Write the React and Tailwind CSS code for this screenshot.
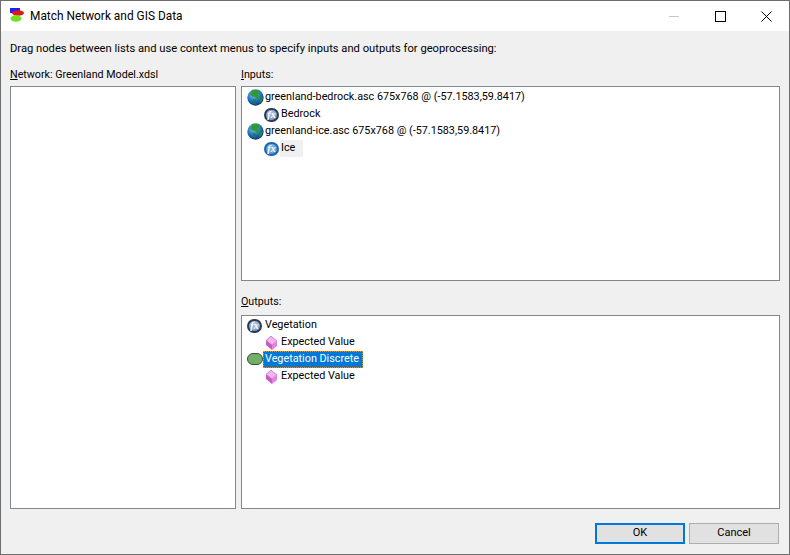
function Globe() {
  return (
    <svg width="17" height="17" viewBox="0 0 17 17" className="shrink-0">
      <defs>
        <radialGradient id="sea" cx="0.4" cy="0.3" r="0.8">
          <stop offset="0" stopColor="#8cc8f4" />
          <stop offset="0.55" stopColor="#1f6fc0" />
          <stop offset="1" stopColor="#0a2660" />
        </radialGradient>
      </defs>
      <circle cx="8.5" cy="8.5" r="8.2" fill="url(#sea)" />
      <path d="M5 1.5 C8 0.5 12 1 13.5 3 L11 5 L12 8 L9.5 10.5 L8.5 8 L5.5 7.5 L3 5.5 Z" fill="#2e9a30" />
      <path d="M6 10 L9 11 L8.5 15 L6.5 14 Z" fill="#1f7f2c" />
      <path d="M13 9 L15.8 8 L15 12 L12 14.5 Z" fill="#2a8a34" />
    </svg>
  );
}

function FxIcon({ dark }) {
  return (
    <span
      className={`flex h-[14px] w-[15px] shrink-0 items-center justify-center rounded-full border-2 font-['Liberation_Serif',serif] text-[10px] font-bold italic leading-none text-white ${
        dark
          ? "border-[#2b3a56] bg-[radial-gradient(circle_at_50%_35%,#b4c8e2,#6c8ab2)]"
          : "border-[#1f66a8] bg-[radial-gradient(circle_at_50%_35%,#8fbee8,#3f8cce)]"
      }`}
    >
      fx
    </span>
  );
}

function Cube() {
  return (
    <svg width="13" height="16" viewBox="0 0 13 16" className="mr-[3px] ml-[1px] shrink-0">
      <path d="M6 1 L12 6 L7 10 L1 5.5 Z" fill="#f4b4ee" stroke="#b050b0" strokeWidth="0.6" />
      <path d="M1 5.5 L7 10 L7 15 L1 10 Z" fill="#c45cc4" />
      <path d="M12 6 L7 10 L7 15 L12 11 Z" fill="#e680e2" />
    </svg>
  );
}

function Row({ indent, icon, children, textClass = "" }) {
  return (
    <div className={`flex h-[17px] items-center text-[10.8px] ${indent ? "pl-[22px]" : "pl-[5px]"}`}>
      {icon}
      <span className={`flex h-[17px] items-center whitespace-nowrap ${textClass}`}>{children}</span>
    </div>
  );
}

function AppIcon() {
  return (
    <svg width="16" height="16" viewBox="0 0 16 16" className="shrink-0">
      <rect x="1" y="0" width="10" height="5" fill="#2020f0" />
      <ellipse cx="9" cy="5" rx="6" ry="2.8" fill="#e01818" />
      <ellipse cx="7" cy="10.5" rx="5.5" ry="3.2" fill="#70e020" />
    </svg>
  );
}

function WindowButtons() {
  return (
    <div className="ml-auto flex items-center">
      <svg width="11" height="11" viewBox="0 0 11 11" shapeRendering="crispEdges" className="mr-[35px]">
        <rect x="0" y="5" width="10" height="1" fill="#c8c8c8" />
      </svg>
      <svg width="11" height="11" viewBox="0 0 11 11" shapeRendering="crispEdges" className="mr-[35px]">
        <rect x="0.5" y="0.5" width="9.5" height="9.5" fill="none" stroke="#000" />
      </svg>
      <svg width="11" height="11" viewBox="0 0 11 11" className="mr-[17px]">
        <path d="M0.5 0.5 L10.5 10.5 M10.5 0.5 L0.5 10.5" stroke="#000" strokeWidth="1" fill="none" />
      </svg>
    </div>
  );
}

export default function App() {
  return (
    <div
      className="relative flex h-[555px] w-[790px] flex-col overflow-hidden border border-[#6f6f6f] bg-[#f0f0f0] text-[11px] text-black"
      style={{ fontFamily: 'Roboto, sans-serif' }}
    >
      <div className="absolute -left-px -top-px h-px w-[149px] bg-[#762a16]" />
      <div className="absolute -left-px top-0 h-[313px] w-px bg-[linear-gradient(to_bottom,#6e2b14_0%,#7a3a14_70%,#7f7414_85%,#2f8a20_94%,#2f8a20_100%)]" />

      <div className="flex h-[30px] items-center bg-white pl-[8px]">
        <AppIcon />
        <span className="ml-[5px] pt-px text-[11.9px]">Match Network and GIS Data</span>
        <WindowButtons />
      </div>

      <div className="flex flex-1 flex-col px-[9px] pb-[10px] pt-[9px]">
        <p className="h-[17px] text-[11.2px] leading-[17px]">
          Drag nodes between lists and use context menus to specify inputs and outputs for geoprocessing:
        </p>
        <div className="mt-[9px] flex h-[443px] gap-[5px]">
          <div className="flex w-[226px] flex-col">
            <div className="h-[17px] text-[10.7px] leading-[17px]">
              <u>N</u>etwork: Greenland Model.xdsl
            </div>
            <div className="mt-[3px] flex-1 border border-[#82878f] bg-white" />
          </div>
          <div className="flex w-[539px] flex-col">
            <div className="h-[17px] text-[10.7px] leading-[17px]">
              <u>I</u>nputs:
            </div>
            <div className="mt-[3px] h-[195px] border border-[#82878f] bg-white pt-[2px]">
              <Row icon={<Globe />} textClass="pl-px">greenland-bedrock.asc 675x768 @ (-57.1583,59.8417)</Row>
              <Row indent icon={<FxIcon dark />} textClass="pl-[2px]">Bedrock</Row>
              <Row icon={<Globe />} textClass="pl-px">greenland-ice.asc 675x768 @ (-57.1583,59.8417)</Row>
              <Row indent icon={<FxIcon />} textClass="ml-px w-[23px] bg-[#f0f0f0] pl-px">Ice</Row>
            </div>
            <div className="mt-[12px] h-[17px] text-[10.7px] leading-[17px]">
              <u>O</u>utputs:
            </div>
            <div className="mt-[5px] flex-1 border border-[#82878f] bg-white pt-px">
              <Row icon={<FxIcon dark />} textClass="pl-[3px]">Vegetation</Row>
              <Row indent icon={<Cube />}>Expected Value</Row>
              <Row
                icon={<span className="-mt-px h-[12px] w-[16px] shrink-0 rounded-full border border-[#3a4f3a] bg-[#72b06a]" />}
                textClass="w-[100px] border border-dotted border-[#e8921a] bg-[#0078d7] pl-px text-white"
              >
                Vegetation Discrete
              </Row>
              <Row indent icon={<Cube />}>Expected Value</Row>
            </div>
          </div>
        </div>
        <div className="mt-[14px] flex justify-end gap-[4px] pr-[1px]">
          <button className="h-[21px] w-[90px] border-2 border-[#0078d7] bg-[#e1e1e1]">OK</button>
          <button className="h-[21px] w-[90px] border border-[#adadad] bg-[#e1e1e1]">Cancel</button>
        </div>
      </div>
    </div>
  );
}
